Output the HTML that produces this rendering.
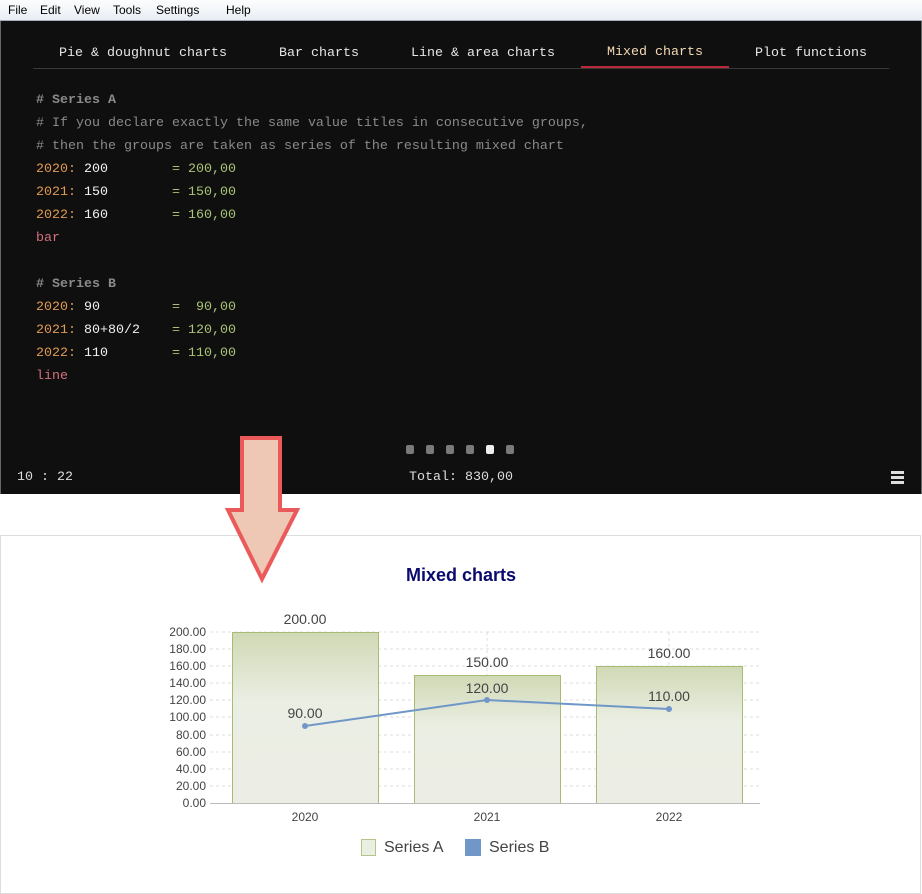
<!DOCTYPE html>
<html><head><style>
body{margin:0;width:922px;height:894px;background:#fff;position:relative;overflow:hidden;font-family:"Liberation Sans",sans-serif}
.menu{position:absolute;left:0;top:0;width:922px;height:20px;background:linear-gradient(#fdfdfd,#e9eef5);border-bottom:1px solid #aab;font-size:12px}
.menu span{position:absolute;top:3px}
.dark{position:absolute;left:0;top:21px;width:920px;height:473px;background:#0f0f0f;border-left:1px solid #666;border-right:1px solid #666}
.m{font-family:"Liberation Mono",monospace;font-size:13.33px;position:absolute;white-space:pre}
.tab{top:25px;color:#e6e6e6}
.c{color:#8a8a8a}.b{font-weight:bold}.o{color:#e09a52}.w{color:#f0f0f0}.g{color:#a9c377}.p{color:#d4707c}
.dot{position:absolute;width:8px;height:9px;border-radius:2px;background:#7a7a7a}
</style></head><body>
<div class="menu"><span style="left:8px">File</span><span style="left:40px">Edit</span><span style="left:74px">View</span><span style="left:113px">Tools</span><span style="left:156px">Settings</span><span style="left:226px">Help</span></div>
<div class="dark">
<div class="m tab" style="left:58px">Pie &amp; doughnut charts</div>
<div class="m tab" style="left:278px">Bar charts</div>
<div class="m tab" style="left:410px">Line &amp; area charts</div>
<div class="m tab" style="left:606px;color:#f5d9b5;top:24px">Mixed charts</div>
<div class="m tab" style="left:754px">Plot functions</div>
<div style="position:absolute;left:32px;top:47px;width:856px;height:1px;background:#3a3a3a"></div>
<div style="position:absolute;left:580px;top:45px;width:148px;height:2px;background:#b8283a"></div>
<div class="m" style="left:35px;top:68px;line-height:23px"><span class="c b"># Series A</span>
<span class="c"># If you declare exactly the same value titles in consecutive groups,</span>
<span class="c"># then the groups are taken as series of the resulting mixed chart</span>
<span class="o">2020:</span> <span class="w">200</span>        <span class="g">= 200,00</span>
<span class="o">2021:</span> <span class="w">150</span>        <span class="g">= 150,00</span>
<span class="o">2022:</span> <span class="w">160</span>        <span class="g">= 160,00</span>
<span class="p">bar</span>

<span class="c b"># Series B</span>
<span class="o">2020:</span> <span class="w">90</span>         <span class="g">=  90,00</span>
<span class="o">2021:</span> <span class="w">80+80/2</span>    <span class="g">= 120,00</span>
<span class="o">2022:</span> <span class="w">110</span>        <span class="g">= 110,00</span>
<span class="p">line</span></div>
<div class="dot" style="left:405px;top:424px"></div><div class="dot" style="left:425px;top:424px"></div><div class="dot" style="left:445px;top:424px"></div><div class="dot" style="left:465px;top:424px"></div><div class="dot" style="left:485px;top:424px;background:#eee"></div><div class="dot" style="left:505px;top:424px"></div>
<div class="m" style="left:16px;top:449px;color:#ddd">10 : 22</div>
<div class="m" style="left:408px;top:449px;color:#ddd">Total: 830,00</div>
<div style="position:absolute;left:890px;top:450px;width:13px;height:3px;background:#ddd;box-shadow:0 5px 0 #ddd,0 10px 0 #ddd"></div>
</div>
<div style="position:absolute;left:0;top:535px;width:919px;height:357px;border:1px solid #ddd"></div>
<svg style="position:absolute;left:0;top:0" width="922" height="894" font-family="Liberation Sans,sans-serif">
<defs><linearGradient id="gr" x1="0" y1="0" x2="0" y2="1"><stop offset="0" stop-color="#d0d9b5"/><stop offset="0.4" stop-color="#ebeee3"/><stop offset="1" stop-color="#eceee6"/></linearGradient></defs>
<text x="461" y="581" text-anchor="middle" font-size="18" font-weight="bold" fill="#0a0a6e">Mixed charts</text>
<g stroke="#ddd" stroke-dasharray="3,3">
<line x1="210" x2="760" y1="632" y2="632"/><line x1="210" x2="760" y1="649" y2="649"/><line x1="210" x2="760" y1="666" y2="666"/><line x1="210" x2="760" y1="683" y2="683"/><line x1="210" x2="760" y1="700" y2="700"/><line x1="210" x2="760" y1="717" y2="717"/><line x1="210" x2="760" y1="735" y2="735"/><line x1="210" x2="760" y1="752" y2="752"/><line x1="210" x2="760" y1="769" y2="769"/><line x1="210" x2="760" y1="786" y2="786"/>
<line x1="305" x2="305" y1="632" y2="803"/><line x1="487" x2="487" y1="632" y2="803"/><line x1="669" x2="669" y1="632" y2="803"/>
</g>
<g fill="url(#gr)" stroke="#a7bb73"><rect x="232.5" y="632.5" width="146" height="171"/><rect x="414.5" y="675.5" width="146" height="128"/><rect x="596.5" y="666.5" width="146" height="137"/></g>
<line x1="210" x2="760" y1="803.5" y2="803.5" stroke="#bbb"/>
<g font-size="12" fill="#444" text-anchor="end">
<text x="206" y="636">200.00</text><text x="206" y="653">180.00</text><text x="206" y="670">160.00</text><text x="206" y="687">140.00</text><text x="206" y="704">120.00</text><text x="206" y="721">100.00</text><text x="206" y="739">80.00</text><text x="206" y="756">60.00</text><text x="206" y="773">40.00</text><text x="206" y="790">20.00</text><text x="206" y="807">0.00</text></g>
<g font-size="12" fill="#444" text-anchor="middle"><text x="305" y="821">2020</text><text x="487" y="821">2021</text><text x="669" y="821">2022</text></g>
<polyline points="305,726 487,700 669,709" fill="none" stroke="#7097c8" stroke-width="2"/>
<g fill="#7097c8"><circle cx="305" cy="726" r="3"/><circle cx="487" cy="700" r="3"/><circle cx="669" cy="709" r="3"/></g>
<g font-size="14" fill="#444" text-anchor="middle"><text x="305" y="624">200.00</text><text x="487" y="667">150.00</text><text x="669" y="658">160.00</text><text x="305" y="718">90.00</text><text x="487" y="693">120.00</text><text x="669" y="701">110.00</text></g>
<rect x="361.5" y="839.5" width="14" height="16" fill="#ebeee3" stroke="#b5c58a"/><text x="384" y="852" font-size="16" fill="#444">Series A</text>
<rect x="465" y="839" width="16" height="17" fill="#7097c8"/><text x="489" y="852" font-size="16" fill="#444">Series B</text>
<path d="M242,438 L280,438 L280,510 L297,510 L262,579 L228,510 L242,510 Z" fill="#efc8b5" stroke="#ea5a5a" stroke-width="4" stroke-linejoin="miter"/>
</svg>
</body></html>
